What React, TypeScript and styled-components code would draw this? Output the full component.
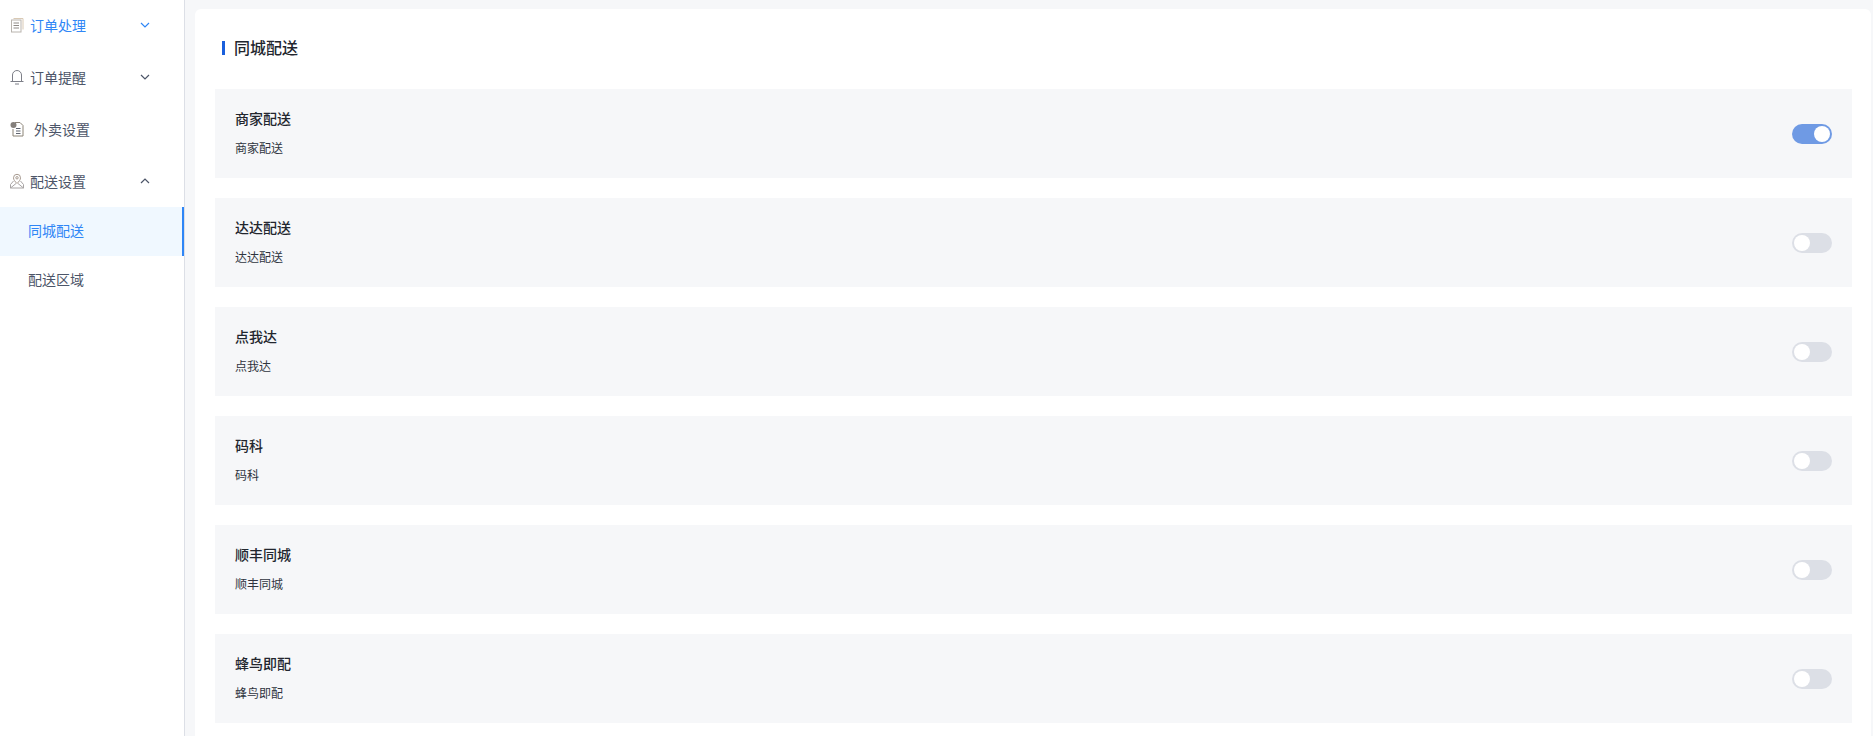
import * as React from 'react';
import styled, { createGlobalStyle } from 'styled-components';

const GlobalStyle = createGlobalStyle`
  html, body {
    margin: 0;
    padding: 0;
    height: 100%;
    overflow: hidden;
    background: #f6f7f9;
    font-family: "Noto Sans CJK SC", "Liberation Sans", sans-serif;
  }
`;

const Layout = styled.div`
  display: flex;
  height: 736px;
`;

const Sidebar = styled.aside`
  flex: 0 0 184px;
  background: #fff;
  border-right: 1px solid #dcdfe6;
`;

const MenuRow = styled.div<{ $active?: boolean; $gap?: number }>`
  display: flex;
  align-items: center;
  box-sizing: border-box;
  height: 52px;
  padding: 0 0 2px 10px;
  color: ${(p) => (p.$active ? '#2f86f6' : '#4c5568')};
  font-size: 14px;
  gap: ${(p) => p.$gap ?? 6}px;
`;

const MenuLabel = styled.span`
  flex: 1;
`;

const Chevron = styled.svg`
  width: 12px;
  height: 12px;
  margin: 0 33px 1px 0;
`;

const IconBox = styled.svg`
  width: 14px;
  height: 16px;
  flex: 0 0 14px;
`;

const SubMenu = styled.div`
  margin-top: -1px;
`;

const SubItem = styled.div<{ $active?: boolean }>`
  display: flex;
  align-items: center;
  box-sizing: border-box;
  height: 49px;
  padding: 0 0 3px 28px;
  font-size: 14px;
  color: ${(p) => (p.$active ? '#2f86f6' : '#4c5568')};
  background: ${(p) => (p.$active ? '#f0f8ff' : 'transparent')};
  border-right: 2px solid ${(p) => (p.$active ? '#2f86f6' : 'transparent')};
`;

const Main = styled.main`
  flex: 1;
  padding: 9px 2px 0 10px;
  min-width: 0;
`;

const Card = styled.section`
  background: #fff;
  border-radius: 6px 6px 0 0;
  height: 727px;
  padding: 0 19px 0 20px;
  box-sizing: border-box;
  overflow: hidden;
`;

const Heading = styled.h2`
  display: flex;
  align-items: center;
  gap: 9px;
  height: 80px;
  margin: 0;
  padding-left: 7px;
  padding-bottom: 4px;
  box-sizing: border-box;
  font-size: 16px;
  font-weight: 500;
  color: #22262e;

  &::before {
    content: '';
    width: 3px;
    height: 14px;
    margin-top: 2px;
    background: #1a5fdc;
  }
`;

const List = styled.div`
  display: flex;
  flex-direction: column;
  gap: 20px;
`;

const Row = styled.div`
  display: flex;
  align-items: center;
  justify-content: space-between;
  height: 89px;
  padding: 0 20px;
  background: #f6f7f9;
`;

const RowText = styled.div`
  padding-bottom: 2px;
`;

const RowTitle = styled.div`
  font-size: 14px;
  font-weight: 500;
  line-height: 20px;
  color: #22262e;
`;

const RowDesc = styled.div`
  margin-top: 11px;
  font-size: 12px;
  line-height: 18px;
  color: #2f343e;
`;

const Toggle = styled.span<{ $on?: boolean }>`
  position: relative;
  display: block;
  width: 40px;
  height: 20px;
  border-radius: 10px;
  background: ${(p) => (p.$on ? '#6f9ae4' : '#dcdfe6')};

  &::after {
    content: '';
    position: absolute;
    top: 2px;
    left: ${(p) => (p.$on ? '22px' : '2px')};
    width: 16px;
    height: 16px;
    border-radius: 50%;
    background: #fff;
  }
`;

const ChevronIcon = ({ up, color }: { up?: boolean; color: string }) => (
  <Chevron viewBox="0 0 12 12" fill="none" stroke={color} strokeWidth="1.2">
    <path d={up ? 'M2 8l4-4 4 4' : 'M2 4l4 4 4-4'} />
  </Chevron>
);

const OrderIcon = () => (
  <IconBox viewBox="0 0 14 16" fill="none" strokeWidth="1">
    <path d="M3.500 1.500h9.500v11" stroke="#d9c9b4" />
    <rect x="1.500" y="3" width="9.500" height="12" stroke="#b9b4ae" />
    <path d="M3.500 6h5.500M3.500 8.500h5.500M3.500 11h5.500" stroke="#8f8a86" />
  </IconBox>
);

const BellIcon = () => (
  <IconBox viewBox="0 0 14 16" fill="none" stroke="#7d7f88" strokeWidth="1">
    <path d="M2.500 12V6a4.500 4.500 0 0 1 9 0v6" />
    <path d="M.5 12.500h13" />
    <path d="M5 15h4" />
  </IconBox>
);

const TakeoutIcon = () => (
  <IconBox viewBox="0 0 14 16" fill="none" strokeWidth="1">
    <path d="M5 1.500h5l3 3v10.500H3V8" stroke="#8b8377" />
    <circle cx="3.500" cy="4" r="3" fill="#85807c" />
    <path d="M6 7.500h4.500M6 10h4.500M6 12.500h4.500" stroke="#5f6470" />
  </IconBox>
);

const DeliveryIcon = () => (
  <IconBox viewBox="0 0 14 16" fill="none" strokeWidth="1">
    <path d="M7 10.500C5 8.500 3.500 6.800 3.500 4.800a3.500 3.500 0 0 1 7 0C10.500 6.800 9 8.500 7 10.500z" stroke="#a79a90" />
    <circle cx="7" cy="4.800" r="1.200" stroke="#a79a90" />
    <path d="M3.500 8L.5 11.500v3.500h13v-3.500L10.500 8M.5 15L6 10.500M13.500 15L8 10.500" stroke="#a8a4a4" />
  </IconBox>
);

const channels = [
  { name: '商家配送', on: true },
  { name: '达达配送' },
  { name: '点我达' },
  { name: '码科' },
  { name: '顺丰同城' },
  { name: '蜂鸟即配' },
];

export default function App() {
  return (
    <>
      <GlobalStyle />
      <Layout>
        <Sidebar>
          <MenuRow $active>
            <OrderIcon />
            <MenuLabel>订单处理</MenuLabel>
            <ChevronIcon color="#2f86f6" />
          </MenuRow>
          <MenuRow>
            <BellIcon />
            <MenuLabel>订单提醒</MenuLabel>
            <ChevronIcon color="#4c5568" />
          </MenuRow>
          <MenuRow $gap={10}>
            <TakeoutIcon />
            <MenuLabel>外卖设置</MenuLabel>
          </MenuRow>
          <MenuRow>
            <DeliveryIcon />
            <MenuLabel>配送设置</MenuLabel>
            <ChevronIcon up color="#4c5568" />
          </MenuRow>
          <SubMenu>
            <SubItem $active>同城配送</SubItem>
            <SubItem>配送区域</SubItem>
          </SubMenu>
        </Sidebar>
        <Main>
          <Card>
            <Heading>同城配送</Heading>
            <List>
              {channels.map((item) => (
                <Row key={item.name}>
                  <RowText>
                    <RowTitle>{item.name}</RowTitle>
                    <RowDesc>{item.name}</RowDesc>
                  </RowText>
                  <Toggle $on={item.on} />
                </Row>
              ))}
            </List>
          </Card>
        </Main>
      </Layout>
    </>
  );
}
